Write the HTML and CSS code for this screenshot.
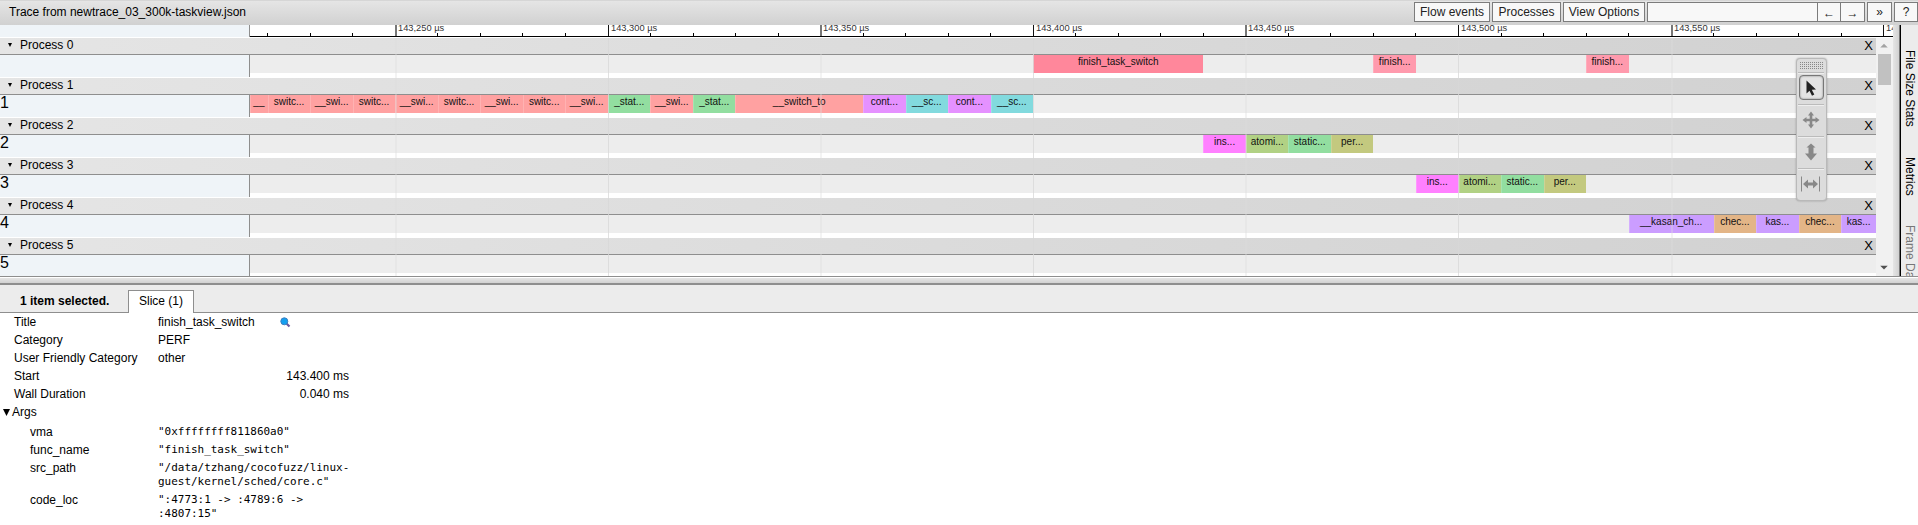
FILE: index.html
```html
<!DOCTYPE html>
<html lang="en">
<head>
<meta charset="utf-8">
<title>Trace viewer</title>
<link rel="stylesheet" href="styles.css">
</head>
<body>
<div class="app">
  <header class="toolbar">
    <div class="title">Trace from newtrace_03_300k-taskview.json</div>
    <div class="controls">
      <button class="btn flow">Flow events</button>
      <button class="btn procs">Processes</button>
      <button class="btn view">View Options</button>
      <div class="find"><input class="search"><button class="btn arrow">←</button><button class="btn arrow">→</button></div>
      <button class="btn more">»</button>
      <button class="btn help">?</button>
    </div>
  </header>
  <main class="middle">
    <section class="timeline">
      <div class="ruler"><div class="ruler-head"></div><div class="ruler-track" id="ruler"></div></div>
      <div class="viewport">
        <div class="processes" id="processes"></div>
        <div class="scrollbar">
          <svg class="sb-arrow" viewBox="0 0 16 17"><path d="M4 10h8L8 6z" fill="#a3a3a3"/></svg>
          <div class="thumb"></div>
          <svg class="sb-arrow end" viewBox="0 0 16 17"><path d="M4 6h8l-4 4z" fill="#505050"/></svg>
        </div>
      </div>
      <div class="gridlines" id="grid"></div>
      <div class="tools">
        <svg class="grip" width="24" height="8"><defs><pattern id="dots" width="2" height="2" patternUnits="userSpaceOnUse"><rect width="1" height="1" fill="#888"/></pattern></defs><rect width="24" height="7" fill="url(#dots)"/></svg>
        <div class="tool"><div class="tool-on"><svg width="24" height="24" viewBox="0 0 24 24"><path d="M7.500 4.500v13l3-2.700 2.500 5 2.300-1.200-2.500-4.800 4.200-.3z" fill="#222"/></svg></div></div>
        <div class="tool"><svg width="24" height="24" viewBox="0 0 24 24"><path d="M12 3.500l3 4h-1.700v3.200h3.200V9l4 3-4 3v-1.700h-3.200v3.200H15l-3 4-3-4h1.700v-3.200H7.500V15l-4-3 4-3v1.700h3.200V7.500H9z" fill="#888"/></svg></div>
        <div class="tool"><svg width="24" height="24" viewBox="0 0 24 24"><path d="M12 3.500l4.500 4h-2v6H18l-6 7-6-7h3.500v-6h-2z" fill="#888"/></svg></div>
        <div class="tool"><svg width="24" height="24" viewBox="0 0 24 24"><path d="M2.500 4.500v15M20.500 4.500v15" stroke="#888"/><path d="M4 12l5-4.500v3h5v-3l5 4.500-5 4.500v-3H9v3z" fill="#888"/></svg></div>
      </div>
    </section>
    <div class="vsplit"></div>
    <aside class="side">
      <span class="tab-v">File Size Stats</span><span class="tab-v">Metrics</span><span class="tab-v dim">Frame Data</span>
    </aside>
  </main>
  <div class="hsplit"></div>
  <section class="analysis">
    <div class="tabs"><b class="count">1 item selected.</b><div class="tab">Slice (1)</div></div>
    <dl class="details">
      <dt>Title</dt><dd>finish_task_switch <svg class="lens" width="11" height="11" viewBox="0 0 11 11"><path d="M6.500 6.500l3 3" stroke="#6b5aa0" stroke-width="2.200"/><circle cx="4.300" cy="4.300" r="3.500" fill="#14a0f0" stroke="#3d7fc0"/></svg></dd>
      <dt>Category</dt><dd>PERF</dd>
      <dt>User Friendly Category</dt><dd>other</dd>
      <dt>Start</dt><dd class="num">143.400 ms</dd>
      <dt>Wall Duration</dt><dd class="num">0.040 ms</dd>
    </dl>
    <div class="args-title"><svg width="7" height="7"><path d="M0 0h7L3.500 7z"/></svg>Args</div>
    <dl class="details args">
      <dt>vma</dt><dd>"0xffffffff811860a0"</dd>
      <dt>func_name</dt><dd>"finish_task_switch"</dd>
      <dt>src_path</dt><dd>"/data/tzhang/cocofuzz/linux-<br>guest/kernel/sched/core.c"</dd>
      <dt>code_loc</dt><dd>":4773:1 -&gt; :4789:6 -&gt;<br>:4807:15"</dd>
    </dl>
  </section>
</div>
<script src="trace.js"></script>
</body>
</html>
```
FILE: styles.css
```css
* { box-sizing: border-box; }
body { margin: 0; overflow: hidden; background: #fff; color: #000; font: 12px/14px "Liberation Sans", Arial, sans-serif; }
.app { display: flex; flex-direction: column; width: 1918px; height: 525px; }
.toolbar { display: flex; justify-content: space-between; height: 25px; flex: none; background: linear-gradient(#e5e5e5, #d1d1d1); border-top: 1px solid #d6d6d6; }
.title { padding: 4px 0 0 9px; }
.controls { display: flex; gap: 2px; padding-top: 1px; }
.btn { height: 20px; padding: 0; border: 1px solid #7c7c7c; background: #f8f8f8; color: #222; font: 12px/16px "Liberation Sans", Arial, sans-serif; }
.flow { width: 76px; }
.procs { width: 69px; }
.view { width: 82px; }
.find { display: flex; }
.search { width: 170px; height: 20px; border: 1px solid #7c7c7c; border-right: 0; background: #f8f8f8; padding: 0; }
.arrow { width: 24px; padding-top: 2px; }
.arrow + .arrow { border-left: 0; }
.more { width: 25px; }
.help { width: 24px; }
.middle { display: flex; height: 251px; flex: none; overflow: hidden; }
.timeline { position: relative; width: 1893px; }
.ruler { display: flex; height: 13px; }
.ruler-head { width: 250px; height: 12px; background: #eff4f8; border-right: 1px solid #8e8e8e; }
.ruler-track { position: relative; flex: 1; height: 12px; overflow: hidden; border-bottom: 1px solid #000; font-size: 9.300px; line-height: 12px; color: #333; }
.tick { position: absolute; bottom: 0; width: 1px; height: 3px; background: #000; }
.tick.major { height: 12px; background: #111; }
.tick.major.soft { width: 2px; background: #777; }
.tick-label { position: absolute; top: -3px; white-space: nowrap; }
.viewport { display: flex; height: 238px; }
.processes { width: 1876px; overflow: hidden; }
.process { height: 40px; }
.process-head { display: flex; align-items: center; height: 17px; padding: 0 3px 2px 8px; border-bottom: 1px solid #8e8e8e; background: linear-gradient(to right, #e5e5e5, #d1d1d1); }
.process-head svg { margin-right: 8px; }
.close { margin-left: auto; padding-top: 2px; font-size: 13px; }
.process-row { display: flex; height: 23px; }
.row-head { width: 250px; height: 22px; border-right: 1px solid #8e8e8e; background: #eff4f8; font-size: 16px; line-height: 16px; }
.track { display: flex; width: 1626px; height: 18px; background: #ededed; overflow: hidden; }
.slice { flex: none; overflow: hidden; text-align: center; white-space: nowrap; font-size: 10px; line-height: 13px; color: #111; box-shadow: inset 1px 0 rgba(255,255,255,.18); }
.gridlines { position: absolute; left: 250px; top: 13px; width: 1626px; height: 238px; overflow: hidden; }
.gridline { position: absolute; width: 1px; height: 238px; background: rgba(215,215,215,.75); }
.gridline.soft { width: 2px; background: rgba(220,220,220,.35); }
.scrollbar { display: flex; flex-direction: column; width: 17px; background: #f1f1f1; }
.sb-arrow { width: 16px; height: 16px; }
.sb-arrow.end { margin-top: auto; }
.thumb { width: 13px; height: 31px; margin-left: 2px; background: #c1c1c1; }
.tools { position: absolute; left: 1796px; top: 33px; width: 31px; height: 143px; padding: 3px 2px 0 1px; border: 1px solid #b9b9b9; border-radius: 4px; background: #dcdcdc; box-shadow: 0 0 2px rgba(0,0,0,.3); }
.grip { display: block; margin: 0 0 2px 2px; }
.tool { display: flex; align-items: center; justify-content: center; height: 32px; padding-bottom: 2px; border-top: 1px solid #bbb; box-shadow: inset 0 1px #eee; }
.tool-on { display: flex; align-items: center; justify-content: center; width: 25px; height: 25px; border: 1px solid #777; border-radius: 4px; background: #e3e3e3; box-shadow: inset 0 0 2px #777; }
.tool-on svg { flex: none; }
.vsplit { width: 7px; background: linear-gradient(to right, #e5e5e5, #d1d1d1); border-right: 1px solid #777; }
.side { display: flex; flex-direction: column; gap: 30px; width: 18px; padding-top: 25px; border-left: 1px solid #000; background: #ececec; }
.tab-v { flex: none; writing-mode: vertical-rl; line-height: 16px; white-space: nowrap; }
.dim { color: #777; }
.hsplit { flex: none; height: 9px; border-top: 1px solid #8e8e8e; border-bottom: 2px solid #8e8e8e; background: linear-gradient(#fff 1px, #e5e5e5 1px, #d1d1d1); }
.analysis { flex: 1; }
.tabs { display: flex; height: 28px; padding: 5px 0 0 20px; background: #ececec; border-bottom: 1px solid #8e8e8e; }
.count { width: 108px; padding-top: 4px; }
.tab { width: 66px; height: 23px; padding-top: 3px; border: 1px solid #8e8e8e; border-bottom: 0; background: #fff; text-align: center; }
.details { display: grid; grid-template-columns: 144px 191px; row-gap: 4px; margin: 0; padding: 2px 0 0 14px; }
.details dd { margin: 0; }
.num { text-align: right; }
.lens { margin-left: 22px; vertical-align: -2px; }
.args-title { display: flex; align-items: center; gap: 2px; margin-top: 4px; padding-left: 3px; }
.args { grid-template-columns: 128px 210px; padding: 6px 0 0 30px; }
.args dd { font: 10.960px/14px "DejaVu Sans Mono", monospace; }
```
FILE: trace.js
```js
const PX_PER_US = 4.2525;
const VIEW_START = 215.81;
const COLORS = {
  finish_task_switch: '#ff879b', 'finish...': '#ff9aad', '_stat...': '#92dea0', 'static...': '#92dea0',
  'cont...': '#e591ff', '__sc...': '#82dade', 'ins...': '#ff80ff', 'atomi...': '#b1d184',
  'per...': '#c3c97f', '__kasan_ch...': '#cb9dff', 'kas...': '#cb9dff', 'chec...': '#e3b587'
};
const A = '__swi...', B = 'switc...';
const slices = [
  [['finish_task_switch', 400, 440], ['finish...', 480, 490], ['finish...', 530, 540]],
  [['__', VIEW_START, 220], [B, 220, 230], [A, 230, 240], [B, 240, 250], [A, 250, 260], [B, 260, 270],
   [A, 270, 280], [B, 280, 290], [A, 290, 300], ['_stat...', 300, 310], [A, 310, 320], ['_stat...', 320, 330],
   ['__switch_to', 330, 360], ['cont...', 360, 370], ['__sc...', 370, 380], ['cont...', 380, 390], ['__sc...', 390, 400]],
  [['ins...', 440, 450], ['atomi...', 450, 460], ['static...', 460, 470], ['per...', 470, 480]],
  [['ins...', 490, 500], ['atomi...', 500, 510], ['static...', 510, 520], ['per...', 520, 530]],
  [['__kasan_ch...', 540, 560], ['chec...', 560, 570], ['kas...', 570, 580], ['chec...', 580, 590], ['kas...', 590, 598.2]],
  []
];

document.getElementById('processes').innerHTML = slices.map((row, i) => {
  let end = VIEW_START;
  const html = row.map(([name, from, to]) => {
    const gap = (from - end) * PX_PER_US;
    end = to;
    return `<div class="slice" style="margin-left:${gap}px;width:${(to - from) * PX_PER_US}px;background-color:${COLORS[name] || '#ffa1a1'}">${name}</div>`;
  }).join('');
  return `<div class="process"><div class="process-head"><svg width="4" height="4"><path d="M0 0h4L2 4z"/></svg>Process ${i}<span class="close">X</span></div>
    <div class="process-row"><div class="row-head">${i || ''}</div><div class="track">${html}</div></div></div>`;
}).join('');

let ruler = '', grid = '';
for (let us = 220; us <= 600; us += 10) {
  const x = Math.floor((us - VIEW_START) * PX_PER_US);
  const major = us % 50 === 0;
  const soft = us % 100 === 50 ? ' soft' : '';
  ruler += `<i class="tick${major ? ' major' : ''}${major ? soft : ''}" style="left:${x}px"></i>`;
  if (major) {
    ruler += `<span class="tick-label" style="left:${x + 3}px">143,${us} µs</span>`;
    grid += `<i class="gridline${soft}" style="left:${x}px"></i>`;
  }
}
document.getElementById('ruler').innerHTML = ruler;
document.getElementById('grid').innerHTML = grid;
```
